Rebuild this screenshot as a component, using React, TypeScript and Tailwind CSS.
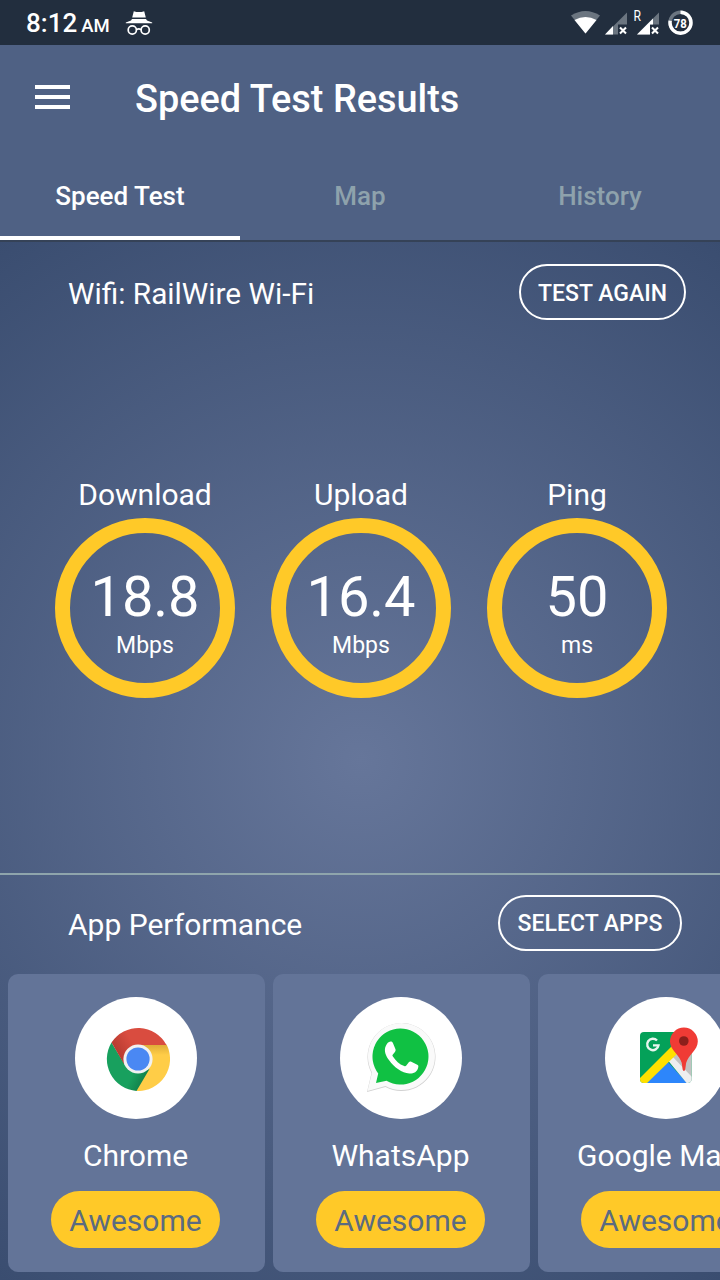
import type { ReactNode } from 'react';

const tabs = ['Speed Test', 'Map', 'History'];

const results = [
  { label: 'Download', value: '18.8', unit: 'Mbps' },
  { label: 'Upload', value: '16.4', unit: 'Mbps' },
  { label: 'Ping', value: '50', unit: 'ms' },
];

function IncognitoIcon() {
  return (
    <svg className="ml-[15px] h-[26px] w-7" viewBox="0 0 28 26" fill="none">
      <path d="M8.800 1.200q2.600.9 5.200.9t5.200-.9l1.600 6.300H7.200z" fill="#fff" />
      <path d="M7 8.900h14l1 1.500 5.200 2v.8H.8v-.8l5.200-2z" fill="#fff" />
      <circle cx="7.300" cy="20" r="4.100" stroke="#fff" strokeWidth="1.700" />
      <circle cx="20.200" cy="20" r="4.100" stroke="#fff" strokeWidth="1.700" />
      <path d="M11.500 19.600q2.300-1.400 4.600 0" stroke="#fff" strokeWidth="1.600" />
    </svg>
  );
}

function StatusIcons() {
  return (
    <svg className="ml-auto h-11 w-[150px]" viewBox="570 0 150 44">
      {/* wifi */}
      <path d="M585.500 32.500 571 14.500q14.500-9 29 0z" fill="#6b7580" />
      <path d="M585.500 32.500 574.500 19q11-6 22 0z" fill="#fff" />
      {/* signal 1 */}
      <path d="M605 33.500 627 11.500v12h-9v10z" fill="#6b7580" />
      <path d="M605 33.500l8-8.500v8.500z" fill="#fff" />
      <path d="m620 26.500 6 6m0-6-6 6" stroke="#fff" strokeWidth="2.100" />
      {/* signal 2, roaming */}
      <text x="633.500" y="20" fill="#fff" fontSize="14" fontFamily="Roboto, sans-serif" textLength="7.500" lengthAdjust="spacingAndGlyphs">R</text>
      <path d="M637 33.500 659 11.500v12h-9v10z" fill="#6b7580" />
      <path d="M637 33.500l16-16v6h-3v10z" fill="#fff" />
      <path d="m652 26.500 6 6m0-6-6 6" stroke="#fff" strokeWidth="2.100" />
      {/* battery ring */}
      <circle cx="680.500" cy="21.700" r="10.500" fill="none" stroke="#6b7580" strokeWidth="3.400" />
      <circle cx="680.500" cy="21.700" r="10.500" fill="none" stroke="#fff" strokeWidth="3.400" pathLength="100" strokeDasharray="78 22" transform="rotate(-90 680.5 21.7)" />
      <text x="680.300" y="26.500" fill="#fff" fontSize="13" fontWeight="700" fontFamily="Roboto, sans-serif" textAnchor="middle" textLength="13" lengthAdjust="spacingAndGlyphs">78</text>
    </svg>
  );
}

function ChromeIcon() {
  return (
    <svg className="absolute left-[31px] top-[30px] h-16 w-16" viewBox="0 0 64 64">
      <defs>
        <linearGradient id="redShade" x1="10" y1="24" x2="26" y2="14" gradientUnits="userSpaceOnUse">
          <stop stopColor="#b83b31" />
          <stop offset="1" stopColor="#d94c3f" />
        </linearGradient>
        <linearGradient id="yellowShade" x1="0" y1="18" x2="0" y2="28" gradientUnits="userSpaceOnUse">
          <stop stopColor="#dfad38" />
          <stop offset="1" stopColor="#ffcd47" />
        </linearGradient>
        <linearGradient id="greenShade" x1="40" y1="50" x2="28" y2="44" gradientUnits="userSpaceOnUse">
          <stop stopColor="#12804a" />
          <stop offset="1" stopColor="#18a05e" />
        </linearGradient>
      </defs>
      <path d="M32 17.800H60.700A32 32 0 0 1 30.500 64L32 32z" fill="url(#yellowShade)" />
      <path d="M5.500 15.500 19 38 32 46 43.500 42 30.500 64A32 32 0 0 1 5.500 15.500z" fill="url(#greenShade)" />
      <path d="M5.500 15.500A32 32 0 0 1 60.500 18H32L18 37z" fill="url(#redShade)" />
      <circle cx="32" cy="32" r="14.600" fill="#f1f1f1" />
      <circle cx="32" cy="32" r="11.600" fill="#4a88f3" />
    </svg>
  );
}

function WhatsAppIcon() {
  return (
    <svg className="absolute left-[25px] top-[24px] h-[74px] w-[74px]" viewBox="365 1021 74 74">
      <path d="M367 1092 371.500 1073A34 34 0 1 1 385.500 1087z" fill="#d2d2d2" />
      <path d="M367.500 1091 372 1072.500A33.500 33.500 0 1 1 385.500 1086z" fill="#fafafa" />
      <path d="M376 1083 378.200 1073.500A28 28 0 1 1 386.500 1080.800z" fill="#10c143" />
      <path d="M390.500 1041.400c1.300 0 1.800.3 2.300 1.400l2.600 6.200c.5 1.100.2 2-.5 2.900l-2 2.500c-.7.8-.5 1.300 0 2 2.900 4.500 6.200 7.500 11.300 9.700.9.400 1.500.3 2.100-.5l2.500-3.300c.7-.9 1.400-1.100 2.500-.6l6 3c1.100.5 1.300 1 .9 2.800-.9 4.400-4.700 6.300-8.900 6.100-7.300-.3-15.300-6.500-20-13-3.600-4.800-5.800-10-3.400-14.800 1-2.200 2.600-4.400 4.600-4.400z" fill="#fff" />
    </svg>
  );
}

function MapsIcon() {
  return (
    <svg className="absolute left-[35px] top-[30px] h-[58px] w-[60px]" viewBox="640 1027 60 58">
      <clipPath id="mapTile">
        <rect x="640" y="1032" width="51.500" height="51" rx="4" />
      </clipPath>
      <g clipPath="url(#mapTile)">
        <path d="M640 1032h52v51h-52z" fill="#04a159" />
        <path d="M667 1057 692 1032v51z" fill="#c2c2c2" />
        <path d="M645 1083l22-22 20 22z" fill="#2d86fb" />
        <path d="M666 1058l4-4 24 25-5 7z" fill="#eeeeef" />
        <path d="M638 1080 676 1042l4 9-36 35z" fill="#ffe000" />
      </g>
      <path d="M657 1040.500a5.700 5.700 0 1 0 1.500 4.900h-5.500" fill="none" stroke="#e9f6ef" strokeWidth="2.400" />
      <path d="M684 1071c-1.800 0-1.500-4.200-2.300-8.200-1.700-7.300-11.700-12.800-11.700-21.300a13.900 13.900 0 0 1 27.800 0c0 8.500-9.800 14-11.600 21.300-.8 4-.5 8.200-2.200 8.200z" fill="#f03b35" />
      <circle cx="683.800" cy="1041" r="4.800" fill="#8c1f1b" />
    </svg>
  );
}

const apps: { name: string; icon: ReactNode }[] = [
  { name: 'Chrome', icon: <ChromeIcon /> },
  { name: 'WhatsApp', icon: <WhatsAppIcon /> },
  { name: 'Google Maps', icon: <MapsIcon /> },
];

export default function App() {
  return (
    <div className="flex h-[1280px] w-[720px] flex-col overflow-hidden bg-[#4f6184] font-[Roboto,sans-serif] text-white">
      <div className="flex h-[45px] shrink-0 items-center bg-[#222e3e] pl-[26px]">
        <div className="flex w-[84px] items-baseline pt-px font-medium">
          <span className="text-[26px] leading-[44px]">8:12</span>
          <span className="ml-1 text-[18.5px]">AM</span>
        </div>
        <IncognitoIcon />
        <StatusIcons />
      </div>

      <header className="flex h-[107px] shrink-0 items-center pl-[35px]">
        <div className="mb-1 flex w-[35px] flex-col gap-1.5">
          <div className="h-1 bg-white" />
          <div className="h-1 bg-white" />
          <div className="h-1 bg-white" />
        </div>
        <h1 className="ml-[65px] pt-0.5 text-[37.9px] font-medium whitespace-nowrap">Speed Test Results</h1>
      </header>

      <nav className="grid h-[90px] shrink-0 grid-cols-3 border-b-2 border-[#354257]">
        {tabs.map((tab, i) => (
          <div
            key={tab}
            className={
              i === 0
                ? 'flex items-center justify-center border-b-4 border-white pt-1 text-[26px] font-medium'
                : 'flex items-center justify-center border-b-4 border-transparent pt-1 text-[26px] font-medium text-[#8ea2ac]'
            }
          >
            {tab}
          </div>
        ))}
      </nav>

      <main className="flex min-h-0 flex-1 flex-col bg-[radial-gradient(circle_at_360px_518px,#66769a_0px,#3a4d70_632px)]">
        <div className="flex h-[631px] shrink-0 flex-col">
          <div className="flex items-center justify-between pt-[22px] pr-[34px] pl-[68px]">
            <span className="pt-1 text-[29.8px] leading-9">Wifi: RailWire Wi-Fi</span>
            <button className="h-14 w-[167px] rounded-full border-2 border-white pt-1 text-[23px] font-medium whitespace-nowrap">TEST AGAIN</button>
          </div>

          <div className="mt-[157px] flex justify-center gap-9 pl-px">
            {results.map((r) => (
              <div key={r.label} className="flex w-[180px] flex-col items-center">
                <div className="h-[41px] pl-px text-[30px] leading-9">{r.label}</div>
                <div className="flex h-[180px] w-[180px] flex-col items-center rounded-full border-[15px] border-[#ffc928] pl-px">
                  <span className="mt-[30px] text-[56px] leading-[68px]">{r.value}</span>
                  <span className="pt-px text-[23px] leading-7">{r.unit}</span>
                </div>
              </div>
            ))}
          </div>
        </div>

        <div className="flex h-[101px] shrink-0 items-center justify-between border-t-2 border-[#8fa5ac] pr-[38px] pl-[68px]">
          <span className="text-[30px]">App Performance</span>
          <button className="mb-1 h-14 w-[184px] rounded-full border-2 border-white pt-1 text-[23px] font-medium whitespace-nowrap">SELECT APPS</button>
        </div>

        <div className="flex gap-2 pl-2">
          {apps.map((app) => (
            <div key={app.name} className="flex h-[298px] w-[257px] shrink-0 flex-col items-center rounded-[10px] bg-[#637498] pt-[23px] pr-0.5">
              <div className="relative h-[122px] w-[122px] rounded-full bg-white">{app.icon}</div>
              <div className="mt-[19px] text-[30px] leading-9">{app.name}</div>
              <div className="mt-[17px] flex h-[57px] w-[169px] items-center justify-center rounded-full bg-[#ffc928] pt-0.5 text-[30px] text-[#5b6b80]">
                Awesome
              </div>
            </div>
          ))}
        </div>
      </main>
    </div>
  );
}
